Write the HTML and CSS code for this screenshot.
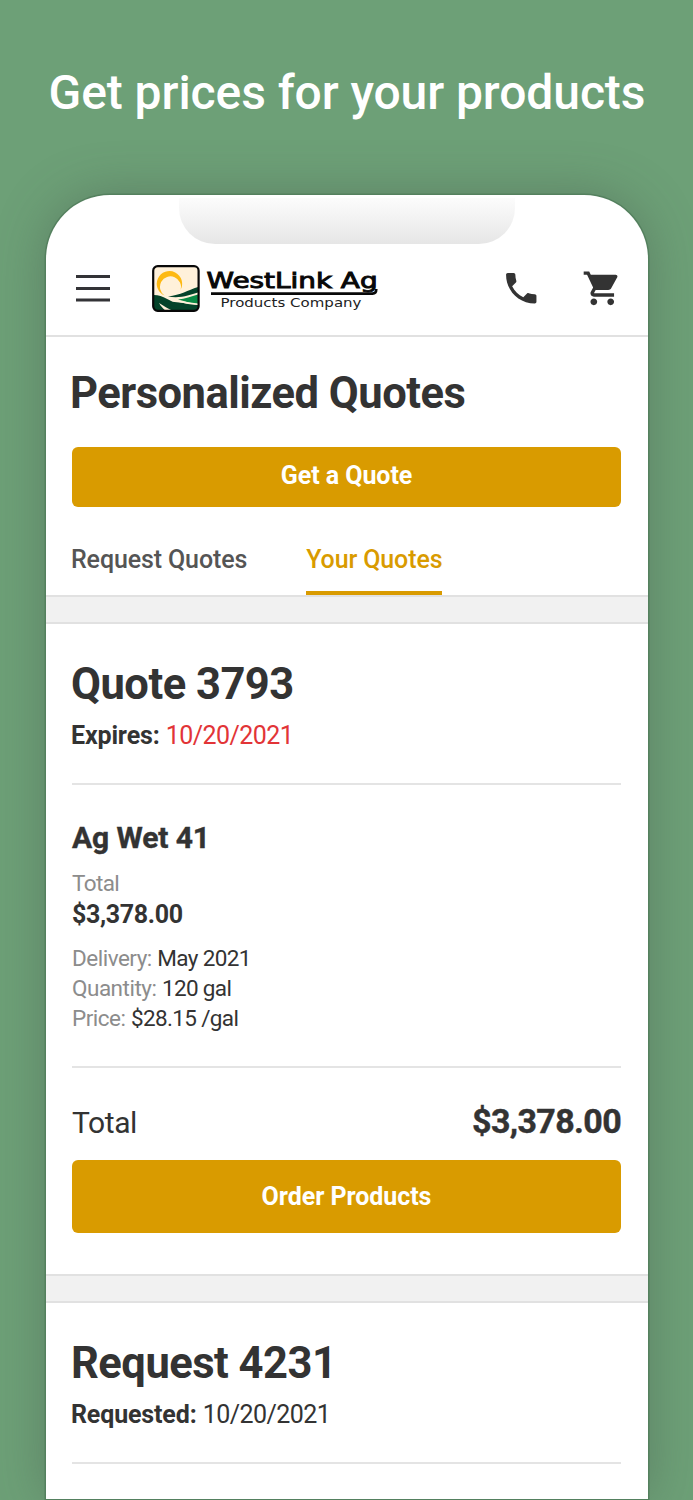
FILE: index.html
```html
<!DOCTYPE html>
<html lang="en">
<head>
<meta charset="utf-8">
<title>WestLink Ag – Personalized Quotes</title>
<link rel="stylesheet" href="styles.css">
</head>
<body>
<div class="promo">
  <div class="promo-title">Get prices for your products</div>
  <div class="phone">
    <div class="notch"></div>
    <header class="topbar">
      <svg class="menu" width="34" height="28" viewBox="0 0 34 28"><path d="M0 1.600H34M0 13.400H34M0 25.100H34" stroke="#333336" stroke-width="3"/></svg>
      <svg class="logo" width="228" height="48" viewBox="0 0 228 48">
        <defs><clipPath id="badge"><rect x="1.500" y="1.500" width="44.500" height="44" rx="3"/></clipPath></defs>
        <g clip-path="url(#badge)">
          <rect width="48" height="48" fill="#fff1da"/>
          <path d="M12.500 30.500A12.700 12.700 0 1 1 28.500 25A10.500 10.500 0 1 0 12.500 30.500Z" fill="#fdb913"/>
          <path d="M0 30C10 29 18 36 27 40C33 43 40 45 48 47H24C18 45 12 41 7 38C9 42 13 45 16 48H0Z" fill="#04432a"/>
          <path d="M16 31.500C30 30 36 25 48 21.500V27C39 29 30 34 16 31.500Z" fill="#04432a"/>
          <path d="M26 34.500C34 34 40 31 48 29V39C42 39 35 37 26 34.500Z" fill="#0a8a45"/>
          <path d="M8 36C22 36 34 39 48 39.500V47H32C24 42 16 38 8 36Z" fill="#04432a"/>
          <path d="M17 33.500C28 35.500 36 38 48 38.500V40C36 40 26 37 17 33.500Z" fill="#fff1da"/>
        </g>
        <rect x="1.200" y="1.200" width="45.400" height="44.600" rx="4.500" fill="none" stroke="#080808" stroke-width="2.200"/>
        <g transform="translate(54.500 22.800) scale(1.240 1)"><text class="logo-name" textLength="138" lengthAdjust="spacingAndGlyphs">WestLink Ag</text></g>
        <path d="M59 28.600H220.500Q224.300 28.600 224.300 24" fill="none" stroke="#080808" stroke-width="2.600"/>
        <g transform="translate(68.500 41.800) scale(1.200 1)"><text class="logo-sub" textLength="117.500" lengthAdjust="spacingAndGlyphs">Products Company</text></g>
      </svg>
      <svg class="call" width="40.500" height="40.500" viewBox="0 0 24 24"><path fill="#333" d="M20 15.500c-1.250 0-2.450-.2-3.570-.57-.35-.11-.74-.03-1.020.24l-2.200 2.200c-2.830-1.440-5.150-3.750-6.590-6.590l2.200-2.210c.28-.26.36-.65.25-1C8.700 6.450 8.500 5.250 8.500 4c0-.55-.45-1-1-1H4c-.55 0-1 .45-1 1 0 9.390 7.610 17 17 17 .55 0 1-.45 1-1v-3.500c0-.55-.45-1-1-1z"/></svg>
      <svg class="cart" width="40.500" height="40.500" viewBox="0 0 24 24"><path fill="#333" d="M7 18c-1.100 0-1.990.9-1.990 2S5.900 22 7 22s2-.9 2-2-.9-2-2-2zM1 2v2h2l3.600 7.590-1.350 2.450c-.16.28-.25.61-.25.96 0 1.100.9 2 2 2h12v-2H7.420c-.14 0-.25-.11-.25-.25l.03-.12.900-1.630h7.450c.75 0 1.410-.41 1.750-1.030l3.580-6.490c.08-.14.12-.31.12-.48 0-.55-.45-1-1-1H5.210l-.94-2H1zm16 16c-1.100 0-1.990.9-1.990 2s.89 2 1.990 2 2-.9 2-2-.9-2-2-2z"/></svg>
    </header>
    <section class="intro">
      <h1>Personalized Quotes</h1>
      <button class="btn">Get a Quote</button>
      <nav class="tabs"><span class="tab">Request Quotes</span><span class="tab active">Your Quotes</span></nav>
    </section>
    <div class="band"></div>
    <section class="card">
      <h2>Quote 3793</h2>
      <p class="meta"><b>Expires:</b> <span class="date expired">10/20/2021</span></p>
      <hr>
      <h3>Ag Wet 41</h3>
      <p class="label">Total</p>
      <p class="amount">$3,378.00</p>
      <dl class="details">
        <div><dt>Delivery:</dt> <dd>May 2021</dd></div>
        <div><dt>Quantity:</dt> <dd>120 gal</dd></div>
        <div><dt>Price:</dt> <dd>$28.15 /gal</dd></div>
      </dl>
      <hr>
      <div class="sum"><span>Total</span><strong>$3,378.00</strong></div>
      <button class="btn order">Order Products</button>
    </section>
    <div class="band"></div>
    <section class="card">
      <h2>Request 4231</h2>
      <p class="meta"><b>Requested:</b> <span class="date">10/20/2021</span></p>
      <hr>
    </section>
  </div>
</div>
</body>
</html>
```
FILE: styles.css
```css
* { box-sizing: border-box; }
body, h1, h2, h3, p, dl, dd { margin: 0; }
body { font-family: Roboto, "Liberation Sans", sans-serif; color: #333; background: #6da077; }
.promo { height: 1500px; overflow: hidden; padding: 63px 45px 0 46px; }
.promo-title { height: 60px; margin: 0 -40px 72px; line-height: 60px; font-size: 48px; font-weight: 500; letter-spacing: -.08px; color: #fff; text-align: center; white-space: nowrap; }
.phone { position: relative; height: 1304px; background: #fff; border-radius: 64px 64px 0 0; box-shadow: 0 0 0 1.5px #54805e, 0 0 50px rgba(70, 80, 75, .42); }
.notch { position: absolute; left: 133px; top: 3px; width: 336px; height: 45.500px; border-radius: 0 0 36px 36px; background: linear-gradient(#fcfcfc, #e6e6e6); }
.topbar { display: flex; align-items: flex-start; height: 142px; padding: 70px 25.500px 0 29.500px; border-bottom: 2px solid #e1e1e1; }
.menu { margin-top: 10px; }
.logo { margin-left: 42.500px; overflow: visible; }
.logo-name { font: 400 20.600px "DejaVu Sans", sans-serif; fill: #080808; stroke: #080808; stroke-width: .9px; }
.logo-sub { font: 400 12px "DejaVu Sans", sans-serif; fill: #222; }
.call { margin: 3px 0 0 120.500px; }
.cart { margin: 3px 0 0 auto; }
.intro { padding: 32px 27px 0 26px; }
h1, h2 { line-height: 50px; font-size: 43.500px; font-weight: 700; letter-spacing: -.5px; white-space: nowrap; }
h1 { margin-left: -2px; }
.btn { display: block; width: 100%; height: 60px; margin-top: 28px; padding: 0 0 3px; border: 0; border-radius: 6px; background: #d99b00; color: #fff; font: 700 25px Roboto, sans-serif; letter-spacing: -.05px; text-align: center; }
.tabs { display: flex; gap: 59px; margin-top: 38px; line-height: 30px; font-size: 25px; font-weight: 500; letter-spacing: -.12px; color: #555; }
.tab { height: 50px; margin-left: -1px; }
.active { margin-left: 0; color: #d99b00; border-bottom: 4px solid #d99b00; }
.band { height: 29px; background: #f1f1f1; border: solid #e1e1e1; border-width: 2px 0; }
.card { padding: 36px 27px 41px 26px; }
h2 { margin-left: -1px; }
.meta { margin: 11px 0 32px -1px; line-height: 30px; font-size: 25px; }
.meta b { letter-spacing: -.15px; }
.date { letter-spacing: -.55px; }
.expired { color: #e23437; }
hr { height: 2px; margin: 0; border: 0; background: #e4e4e4; }
h3 { margin-top: 35px; line-height: 36px; font-size: 30px; font-weight: 700; letter-spacing: -.1px; -webkit-text-stroke: .4px #333; }
.label { margin-top: 12px; line-height: 30px; font-size: 22.500px; letter-spacing: -.6px; color: #8c8c8c; }
.amount { padding-top: 2px; line-height: 30px; font-size: 25px; font-weight: 700; letter-spacing: -.35px; }
.details { margin: 13px 0 32.500px; line-height: 30px; font-size: 22.500px; }
dt, dd { display: inline; }
dt { letter-spacing: -.5px; color: #8c8c8c; }
dd { letter-spacing: -.65px; }
.sum { display: flex; justify-content: space-between; align-items: baseline; height: 42px; margin-top: 32.500px; line-height: 43px; font-size: 30px; letter-spacing: -.4px; }
.sum strong { font-size: 34px; letter-spacing: -.65px; -webkit-text-stroke: .4px #333; }
.order { height: 73px; margin-top: 17.500px; padding: 0; }
```
